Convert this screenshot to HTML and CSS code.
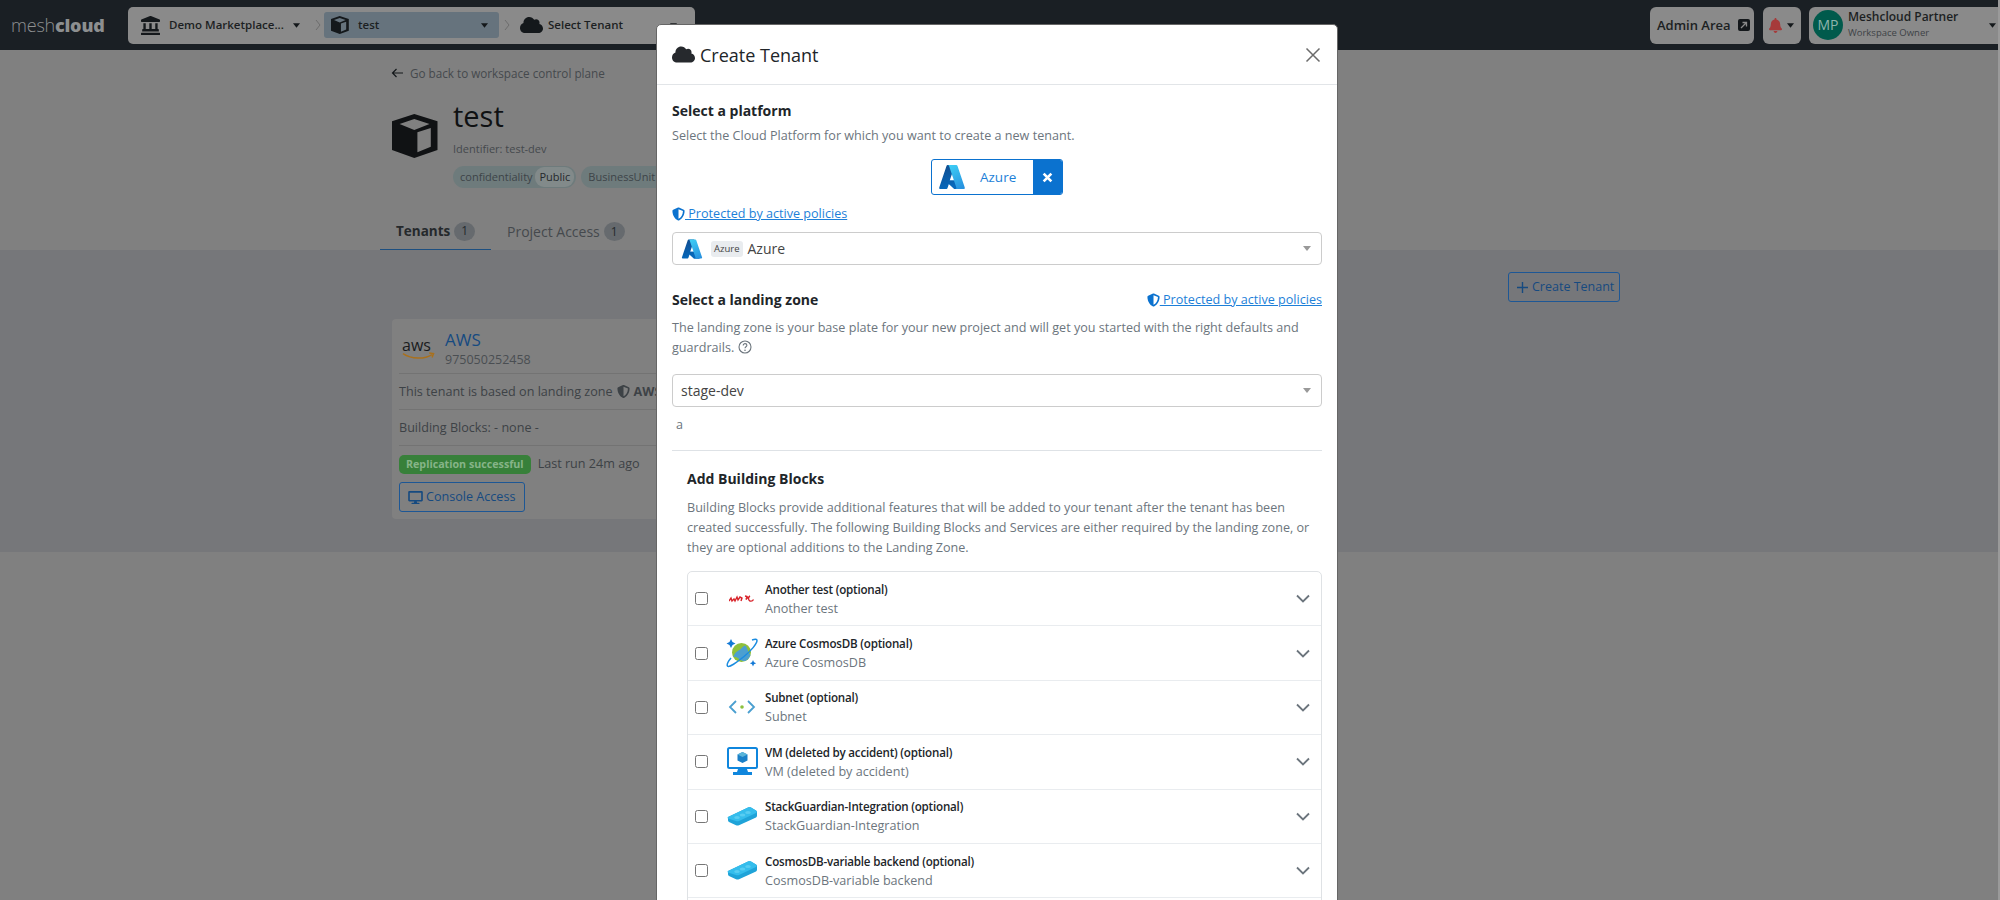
FILE: index.html
```html
<!DOCTYPE html>
<html lang="en">
<head>
  <meta charset="UTF-8" />
  <title>Create Tenant</title>
  <link rel="stylesheet" href="styles.css">
</head>
<body>
  <svg class="defs" width="0" height="0">
    <defs>
      <symbol id="i-cube" viewBox="0 0 46 44" preserveAspectRatio="none"><path fill-rule="evenodd" d="M22.300 0L45.500 7.300V36L22.300 44 0 36V7.300zM22.300 5L7.600 10 22.300 16 37.500 10zM25.400 18.300V38.300L38.800 32.700V14z"/></symbol>
      <symbol id="i-cloud" viewBox="0 0 640 512"><path d="M537.6 226.6c4.1-10.7 6.4-22.4 6.4-34.6 0-53-43-96-96-96-19.7 0-38.1 6-53.3 16.2C367 64.2 315.3 32 256 32c-88.4 0-160 71.6-160 160 0 2.7.1 5.4.2 8.1C40.2 219.8 0 273.2 0 336c0 79.5 64.5 144 144 144h368c70.7 0 128-57.3 128-128 0-61.9-44-113.6-102.4-125.4z"/></symbol>
      <symbol id="i-shield" viewBox="0 0 512 512"><path d="M466.5 83.7l-192-80a48.15 48.15 0 0 0-36.9 0l-192 80C27.7 91.1 16 108.6 16 128c0 198.5 114.5 335.7 221.5 380.3 11.8 4.9 25.1 4.9 36.9 0C360.1 472.6 496 349.3 496 128c0-19.4-11.7-36.9-29.5-44.3zM256.1 446.3l-.1-381 175.9 73.3c-3.3 151.4-82.1 261.1-175.8 307.7z"/></symbol>
      <symbol id="i-chev" viewBox="0 0 14 9"><path d="M1 1.500l6 6 6-6" fill="none" stroke="#6c757d" stroke-width="1.800"/></symbol>
      <symbol id="i-caret" viewBox="0 0 8 5"><path d="M0 0h8L4 5z"/></symbol>
      <symbol id="i-sep" viewBox="0 0 6 12"><path d="M1 1l4 5-4 5" fill="none" stroke="#6d6d6d" stroke-width="1"/></symbol>
      <linearGradient id="az1" x1="0" y1="0" x2="0.3" y2="1"><stop offset="0" stop-color="#114a8b"/><stop offset="1" stop-color="#0669bc"/></linearGradient>
      <linearGradient id="az2" x1="0.3" y1="0" x2="0.7" y2="1"><stop offset="0" stop-color="#3ccbf4"/><stop offset="1" stop-color="#2892df"/></linearGradient>
      <symbol id="i-azure" viewBox="0 0 96 96">
        <path fill="#0078d4" d="M71.17 60.26H29.88a1.91 1.91 0 0 0-1.3 3.31l26.53 24.76a4.17 4.17 0 0 0 2.85 1.13h23.38z"/>
        <path fill="url(#az1)" d="M33.34 6.54a4.12 4.12 0 0 0-3.95 2.88L4.25 83.92a4.14 4.14 0 0 0 3.91 5.54h20.79a4.44 4.44 0 0 0 3.41-2.9l5.02-14.78 17.91 16.7a4.24 4.24 0 0 0 2.66.97h23.29L70.02 60.26l-29.83.01L58.44 6.54z"/>
        <path fill="url(#az2)" d="M66.6 9.36a4.14 4.14 0 0 0-3.93-2.82H33.65a4.15 4.15 0 0 1 3.93 2.82l25.18 74.62a4.15 4.15 0 0 1-3.93 5.48h29.02a4.15 4.15 0 0 0 3.93-5.48z"/>
      </symbol>
      <symbol id="i-brick" viewBox="0 0 30 19">
        <path fill="#1fa3d8" d="M1 10L21 .5c1-.4 2-.4 3 0l5 3c.7.4 1 1 1 1.800v3.500c0 .8-.4 1.400-1 1.700L12 18.300c-1 .4-2 .4-3 0l-7-3.300c-.7-.4-1-1-1-1.800z"/>
        <path fill="#35bdec" d="M1 10L21 .5c1-.4 2-.4 3 0l5 3c1 .6 1 2 0 2.500L12 14c-1 .4-2 .4-3 0L1 11.500c-.6-.4-.6-1.200 0-1.500z"/>
        <ellipse cx="10" cy="10.500" rx="2.800" ry="1.500" fill="#58cdf2"/><ellipse cx="15.500" cy="8" rx="2.800" ry="1.500" fill="#58cdf2"/><ellipse cx="21" cy="5.500" rx="2.800" ry="1.500" fill="#58cdf2"/>
      </symbol>
    </defs>
  </svg>

  <nav class="navbar">
    <a class="logo">mesh<b>cloud</b></a>
    <div class="crumbs">
      <div class="crumb crumb-first">
        <svg class="ic-bank" viewBox="0 0 512 512"><path d="M501.62 92.11L267.24 2.04a31.958 31.958 0 0 0-22.47 0L10.38 92.11A16.001 16.001 0 0 0 0 107.09V144c0 8.84 7.16 16 16 16h480c8.84 0 16-7.16 16-16v-36.91c0-6.67-4.14-12.64-10.38-14.98zM64 192v160H48c-8.84 0-16 7.16-16 16v48h448v-48c0-8.84-7.16-16-16-16h-16V192h-64v160h-96V192h-64v160h-96V192H64zm432 256H16c-8.84 0-16 7.16-16 16v32c0 8.84 7.16 16 16 16h480c8.84 0 16-7.16 16-16v-32c0-8.84-7.16-16-16-16z"/></svg>
        <span>Demo Marketplace...</span>
        <svg class="caret caret-end"><use href="#i-caret"/></svg>
      </div>
      <svg class="sep sep-first"><use href="#i-sep"/></svg>
      <div class="crumb crumb-active">
        <svg class="ic-cube-sm"><use href="#i-cube"/></svg>
        <span>test</span>
        <svg class="caret caret-end"><use href="#i-caret"/></svg>
      </div>
      <svg class="sep sep-second"><use href="#i-sep"/></svg>
      <div class="crumb crumb-last">
        <svg class="ic-cloud-sm"><use href="#i-cloud"/></svg>
        <span>Select Tenant</span>
        <svg class="caret caret-end"><use href="#i-caret"/></svg>
      </div>
    </div>
    <div class="nav-right">
      <a class="nav-btn admin">Admin Area
        <svg class="ic-ext" viewBox="0 0 12 12"><rect width="12" height="12" rx="2" fill="#14181b"/><path d="M3 9l5-5M4.500 3.500h4v4" fill="none" stroke="#8a8a8a" stroke-width="1.300"/></svg>
      </a>
      <a class="nav-btn bell">
        <svg class="ic-bell" viewBox="0 0 448 512"><path d="M224 512c35.32 0 63.97-28.65 63.97-64H160.03c0 35.35 28.65 64 63.97 64zm215.39-149.71c-19.32-20.76-55.47-51.99-55.47-154.29 0-77.7-54.48-139.9-127.94-155.16V32c0-17.67-14.32-32-31.98-32s-31.98 14.33-31.98 32v20.84C118.56 68.1 64.08 130.3 64.08 208c0 102.3-36.15 133.53-55.47 154.29-6 6.45-8.66 14.16-8.61 21.71.11 16.4 12.98 32 32.1 32h383.8c19.12 0 32-15.6 32.1-32 .05-7.55-2.61-15.27-8.61-21.71z"/></svg>
        <svg class="caret"><use href="#i-caret"/></svg>
      </a>
      <a class="nav-btn user">
        <span class="avatar">MP</span>
        <span class="user-text"><span class="user-name">Meshcloud Partner</span><span class="user-role">Workspace Owner</span></span>
        <svg class="caret"><use href="#i-caret"/></svg>
      </a>
    </div>
  </nav>

  <header class="page-head">
    <a class="back"><svg class="back-arrow" viewBox="0 0 12 10"><path d="M12 5H1.500M5.500 1L1.500 5l4 4" fill="none" stroke="#14181b" stroke-width="1.200"/></svg> Go back to workspace control plane</a>
    <div class="title-row">
      <svg class="ic-cube-lg"><use href="#i-cube"/></svg>
      <div>
        <h1>test</h1>
        <div class="identifier">Identifier: test-dev</div>
        <div class="tags">
          <span class="tag">confidentiality <em>Public</em></span>
          <span class="tag">BusinessUnit <em>IT</em></span>
        </div>
      </div>
    </div>
    <div class="tabs">
      <a class="tab tab-active">Tenants <span class="count">1</span></a>
      <a class="tab">Project Access <span class="count">1</span></a>
    </div>
  </header>

  <section class="content">
    <div class="content-inner">
      <div class="actions"><a class="btn-outline btn-create"><svg class="plus" viewBox="0 0 11 11"><path d="M5.500 0v11M0 5.500h11" stroke="#164a80" stroke-width="1.400"/></svg> Create Tenant</a></div>
      <div class="card">
        <div class="card-top">
          <div class="aws-logo">
            <span class="aws-text">aws</span>
            <svg class="aws-smile" viewBox="0 0 34 8"><path d="M1 1.500c9 6 22 6 30 1M28 1l4.500.5-1.500 4" fill="none" stroke="#a9701c" stroke-width="1.500"/></svg>
          </div>
          <div>
            <div class="card-name">AWS</div>
            <div class="card-id">975050252458</div>
          </div>
        </div>
        <div class="card-line">This tenant is based on landing zone <svg class="ic-shield-dk"><use href="#i-shield"/></svg> <b>AWS</b></div>
        <div class="card-line">Building Blocks: - none -</div>
        <div class="card-status"><span class="badge-ok">Replication successful</span><span>Last run 24m ago</span></div>
        <a class="btn-outline btn-console">
          <svg class="ic-desktop" viewBox="0 0 576 512"><path d="M528 0H48C21.5 0 0 21.5 0 48v320c0 26.5 21.5 48 48 48h192l-16 48h-72c-13.3 0-24 10.700-24 24s10.700 24 24 24h272c13.300 0 24-10.700 24-24s-10.700-24-24-24h-72l-16-48h192c26.500 0 48-21.500 48-48V48c0-26.500-21.500-48-48-48zm-16 352H64V64h448v288z"/></svg>
          Console Access</a>
      </div>
    </div>
  </section>

  <div class="page-edge"></div>

  <div class="modal">
    <div class="modal-head">
      <svg class="ic-cloud-md"><use href="#i-cloud"/></svg>
      <h2>Create Tenant</h2>
      <svg class="close" viewBox="0 0 16 16"><path d="M1.500 1.500l13 13M14.500 1.500l-13 13" stroke="#6b6b6b" stroke-width="1.500"/></svg>
    </div>
    <div class="modal-body">
      <h3>Select a platform</h3>
      <p class="muted">Select the Cloud Platform for which you want to create a new tenant.</p>
      <div class="platform-wrap">
        <div class="platform">
          <svg class="ic-azure-lg"><use href="#i-azure"/></svg>
          <span class="platform-name">Azure</span>
          <span class="platform-x"><svg viewBox="0 0 10 10"><path d="M1.500 1.500l7 7M8.500 1.500l-7 7" stroke="#fff" stroke-width="2.400"/></svg></span>
        </div>
      </div>
      <a class="policy"><svg class="ic-shield"><use href="#i-shield"/></svg> Protected by active policies</a>
      <div class="select select-platform">
        <svg class="ic-azure-sm"><use href="#i-azure"/></svg>
        <span class="pill">Azure</span>
        <span>Azure</span>
        <svg class="select-arrow" viewBox="0 0 8 5"><path d="M0 0h8L4 5z"/></svg>
      </div>
      <div class="lz-head">
        <h3>Select a landing zone</h3>
        <a class="policy"><svg class="ic-shield"><use href="#i-shield"/></svg> Protected by active policies</a>
      </div>
      <p class="muted lz-text">The landing zone is your base plate for your new project and will get you started with the right defaults and guardrails.
        <svg class="ic-help" viewBox="0 0 14 14"><circle cx="7" cy="7" r="6" fill="none" stroke="#6c757d" stroke-width="1.100"/><path d="M5.200 5.400c0-2.400 3.700-2.300 3.700-.1 0 1.500-1.900 1.400-1.900 3" fill="none" stroke="#6c757d" stroke-width="1.100"/><circle cx="7" cy="10.300" r=".8" fill="#6c757d"/></svg></p>
      <div class="select select-lz">
        <span>stage-dev</span>
        <svg class="select-arrow" viewBox="0 0 8 5"><path d="M0 0h8L4 5z"/></svg>
      </div>
      <div class="lz-note">a</div>
      <hr>
      <div class="blocks">
        <h3>Add Building Blocks</h3>
        <p class="muted">Building Blocks provide additional features that will be added to your tenant after the tenant has been created successfully. The following Building Blocks and Services are either required by the landing zone, or they are optional additions to the Landing Zone.</p>
        <ul class="block-list">
          <li class="block">
            <input type="checkbox">
            <span class="block-icon"><svg width="26" height="9" viewBox="0 0 26 9"><path d="M0 7l2-3 1 3 2-2 1 2 2-4 1 3 2-3 2 1-1 3M16 2l2 .5-1 3 2-2.500M21 2c-2 1-2 4 0 5 2 .5 3-.5 3.500-1.500" fill="none" stroke="#d8232a" stroke-width="1.400"/></svg></span>
            <span class="block-text"><b>Another test (optional)</b><span>Another test</span></span>
            <svg class="chev"><use href="#i-chev"/></svg>
          </li>
          <li class="block">
            <input type="checkbox">
            <span class="block-icon"><svg width="32" height="32" viewBox="0 0 32 32">
              <circle cx="15.500" cy="15.500" r="9.500" fill="#8fc03a"/>
              <path d="M7 20c4-1 6 3 10 4 3 .6 6-2 7.500-6-3-3-3-7-5-9.500-3 .5-4 4-7 5-2 1-4 3-5.500 6.500z" fill="#4c9fd0"/>
              <path d="M26 3c3-1 5-1 5 .5 0 3-5.500 10-13 16S3 31 1.500 29c-1-1.500 1-5 3.500-8" fill="none" stroke="#1b8ce0" stroke-width="1.500"/>
              <path d="M5 2l1.500 3L9.500 6.500 6.500 8 5 11 3.500 8 .5 6.500 3.500 5z" fill="#1279d6"/>
              <path d="M27 23l1 2.200 2.200 1-2.200 1-1 2.200-1-2.200-2.200-1 2.200-1z" fill="#1279d6"/>
            </svg></span>
            <span class="block-text"><b>Azure CosmosDB (optional)</b><span>Azure CosmosDB</span></span>
            <svg class="chev"><use href="#i-chev"/></svg>
          </li>
          <li class="block">
            <input type="checkbox">
            <span class="block-icon"><svg width="28" height="16" viewBox="0 0 28 16"><path d="M8 2L2 8l6 6M20 2l6 6-6 6" fill="none" stroke="#4a9fd0" stroke-width="1.800"/><circle cx="14" cy="8" r="1.800" fill="#8cc13f"/></svg></span>
            <span class="block-text"><b>Subnet (optional)</b><span>Subnet</span></span>
            <svg class="chev"><use href="#i-chev"/></svg>
          </li>
          <li class="block">
            <input type="checkbox">
            <span class="block-icon"><svg width="31" height="29" viewBox="0 0 31 29"><rect x="1" y="1" width="29" height="20" rx="1.500" fill="#fff" stroke="#0f86dd" stroke-width="2"/><path d="M11 22h9l1 3h4v3H6v-3h4z" fill="#0f86dd"/><path d="M15.500 5l5 2.500v6l-5 2.500-5-2.500v-6z" fill="#1a7fc7"/><path d="M15.500 5l5 2.500-5 2.500-5-2.500z" fill="#59b4d9"/></svg></span>
            <span class="block-text"><b>VM (deleted by accident) (optional)</b><span>VM (deleted by accident)</span></span>
            <svg class="chev"><use href="#i-chev"/></svg>
          </li>
          <li class="block">
            <input type="checkbox">
            <span class="block-icon"><svg class="brick"><use href="#i-brick"/></svg></span>
            <span class="block-text"><b>StackGuardian-Integration (optional)</b><span>StackGuardian-Integration</span></span>
            <svg class="chev"><use href="#i-chev"/></svg>
          </li>
          <li class="block">
            <input type="checkbox">
            <span class="block-icon"><svg class="brick"><use href="#i-brick"/></svg></span>
            <span class="block-text"><b>CosmosDB-variable backend (optional)</b><span>CosmosDB-variable backend</span></span>
            <svg class="chev"><use href="#i-chev"/></svg>
          </li>
          <li class="block block-more"></li>
        </ul>
      </div>
    </div>
  </div>
</body>
</html>
```

FILE: styles.css
```css
html, body {
  height: 900px;
  overflow: hidden;
}
body {
  margin: 0;
  background-color: #808080;
  color: #1c1f22;
  font-family: "Open Sans", "Noto Sans", sans-serif;
  font-size: 12.6px;
  line-height: 20px;
}
svg {
  display: block;
  flex: none;
}
.defs {
  position: absolute;
}
a {
  color: inherit;
}
.page-edge {
  position: absolute;
  top: 0;
  right: 0;
  width: 2px;
  height: 900px;
  background-color: #9a9a9a;
}

/* top bar */
.navbar {
  display: flex;
  align-items: center;
  height: 50px;
  background-color: #1a1f24;
}
.logo {
  width: 128px;
  padding-left: 11px;
  box-sizing: border-box;
  font-size: 18px;
  font-weight: 300;
  color: #8d8f90;
  letter-spacing: -0.2px;
}
.logo b {
  font-weight: 800;
  color: #8d8f90;
}
.crumbs {
  display: flex;
  align-items: center;
  width: 567px;
  height: 37px;
  box-sizing: border-box;
  padding-left: 13px;
  background-color: #8a8a8a;
  border-radius: 5px;
  font-weight: 600;
  font-size: 11.5px;
  white-space: nowrap;
}
.crumb {
  display: flex;
  align-items: center;
  flex: none;
  height: 26px;
  border-radius: 3px;
}
.crumb svg {
  fill: #14181b;
}
.crumb-first {
  width: 159px;
}
.crumb-active {
  width: 175px;
  padding: 0 11px 0 7px;
  box-sizing: border-box;
  background-color: #66737d;
}
.crumb-last {
  width: 166px;
  padding-right: 9px;
  box-sizing: border-box;
}
.ic-bank {
  width: 19px;
  height: 19px;
  margin-right: 9px;
}
.ic-cube-sm {
  width: 18px;
  height: 18px;
  margin-right: 9px;
}
.ic-cloud-sm {
  width: 23px;
  height: 20px;
  margin-right: 5px;
}
.caret {
  width: 7px;
  height: 5px;
  margin-left: 5px;
  fill: #14181b;
}
.caret-end {
  margin-left: auto;
}
.sep {
  width: 6px;
  height: 12px;
}
.sep-first {
  margin: 0 3px 0 15px;
}
.sep-second {
  margin: 0 10px 0 5px;
}
.nav-right {
  display: flex;
  margin-left: auto;
  height: 37px;
}
.nav-btn {
  display: flex;
  align-items: center;
  box-sizing: border-box;
  height: 37px;
  background-color: #8a8a8a;
  border-radius: 6px;
  font-weight: 600;
  font-size: 13px;
}
.admin {
  width: 104px;
  padding-left: 7px;
  margin-right: 9px;
  gap: 7px;
}
.ic-ext {
  width: 12px;
  height: 12px;
}
.bell {
  width: 38px;
  padding-left: 6px;
  margin-right: 8px;
}
.ic-bell {
  width: 13px;
  height: 15px;
  fill: #a63a3a;
}
.user {
  width: 191px;
  padding: 0 4px;
  border-radius: 6px 0 0 6px;
}
.avatar {
  display: flex;
  align-items: center;
  justify-content: center;
  width: 30px;
  height: 30px;
  margin-right: 5px;
  border-radius: 50%;
  background-color: #005a4c;
  color: #8fb5ad;
  font-size: 14px;
  font-weight: 400;
}
.user-text {
  display: flex;
  flex-direction: column;
  flex: 1;
  line-height: 16px;
}
.user-name {
  font-size: 12px;
}
.user-role {
  font-size: 9.500px;
  font-weight: 400;
  color: #3d4246;
}

/* page header */
.page-head {
  width: 1240px;
  height: 200px;
  margin: 0 auto 0 380px;
  box-sizing: border-box;
  padding-top: 13px;
}
.back {
  display: flex;
  align-items: center;
  gap: 7px;
  margin-left: 11px;
  color: #45494d;
  font-size: 11.700px;
}
.back-arrow {
  width: 12px;
  height: 10px;
}
.title-row {
  display: flex;
  margin: 14px 0 0 12px;
}
.ic-cube-lg {
  width: 46px;
  height: 44px;
  margin: 17px 15px 0 0;
  fill: #101214;
}
h1 {
  margin: 0;
  font-size: 29px;
  line-height: 38px;
  font-weight: 500;
  color: #0f1113;
}
.identifier {
  margin-top: 6px;
  font-size: 11px;
  line-height: 16px;
  color: #45494d;
}
.tags {
  display: flex;
  gap: 5px;
  margin-top: 9px;
}
.tag {
  padding: 1px 2px 1px 7px;
  background-color: #6e7b7c;
  border-radius: 11px;
  font-size: 11px;
  color: #3d4448;
  white-space: nowrap;
}
.tag em {
  display: inline-block;
  padding: 0 4px;
  font-style: normal;
  border-radius: 9px;
  background-color: #828a8a;
  color: #25292c;
}
.tabs {
  display: flex;
  margin-top: 25px;
}
.tab {
  display: flex;
  align-items: center;
  gap: 4px;
  height: 37px;
  padding: 0 16px;
  font-size: 14px;
  color: #45494d;
}
.tab-active {
  width: 111px;
  box-sizing: border-box;
  border-bottom: 1px solid #1d4f80;
  font-weight: 700;
  font-size: 13.500px;
  color: #25292c;
}
.count {
  display: flex;
  align-items: center;
  justify-content: center;
  width: 21px;
  height: 19px;
  border-radius: 50%;
  background-color: #666a6e;
  color: #25292c;
  font-size: 12px;
  font-weight: 400;
}

/* tenants section */
.content {
  height: 302px;
  background-color: #76777a;
}
.content-inner {
  width: 1240px;
  margin-left: 380px;
  padding-top: 22px;
}
.actions {
  display: flex;
  justify-content: flex-end;
}
.btn-outline {
  display: flex;
  align-items: center;
  box-sizing: border-box;
  border: 1px solid #1d5795;
  border-radius: 3px;
  color: #164a80;
  font-size: 12.500px;
}
.btn-create {
  width: 112px;
  height: 30px;
  padding-left: 8px;
  gap: 4px;
}
.plus {
  width: 11px;
  height: 11px;
}
.card {
  width: 420px;
  height: 200px;
  margin: 17px 0 0 12px;
  box-sizing: border-box;
  padding: 5px 7px;
  background-color: #808080;
  border-radius: 4px;
  overflow: hidden;
  white-space: nowrap;
  color: #3d4246;
}
.card-top {
  display: flex;
  align-items: center;
  height: 49px;
  border-bottom: 1px solid #737373;
}
.aws-logo {
  width: 46px;
  padding-left: 3px;
  box-sizing: border-box;
}
.aws-text {
  display: block;
  font-size: 16px;
  line-height: 14px;
  color: #1a1c1e;
}
.aws-smile {
  width: 33px;
  height: 8px;
}
.card-name {
  font-size: 17px;
  line-height: 22px;
  color: #164a80;
}
.card-id {
  font-size: 12.500px;
  line-height: 18px;
  color: #4a4e52;
}
.card-line {
  display: flex;
  align-items: center;
  gap: 4px;
  height: 35px;
  border-bottom: 1px solid #737373;
}
.ic-shield-dk {
  width: 13px;
  height: 13px;
  fill: #3d4246;
}
.card-status {
  display: flex;
  align-items: center;
  gap: 7px;
  margin-top: 8px;
}
.badge-ok {
  padding: 0 7px;
  line-height: 19px;
  border-radius: 5px;
  background-color: #37803a;
  color: #86b488;
  font-size: 10.700px;
  font-weight: 700;
}
.btn-console {
  width: 126px;
  height: 30px;
  margin-top: 8px;
  padding-left: 8px;
  gap: 3px;
  font-size: 12.600px;
}
.ic-desktop {
  width: 15px;
  height: 13px;
  fill: #164a80;
}

/* dialog */
.modal {
  position: absolute;
  left: 656px;
  top: 24px;
  width: 682px;
  box-sizing: border-box;
  background-color: #fff;
  border: 1px solid #666;
  border-radius: 5px;
  color: #212529;
}
.modal-head {
  display: flex;
  align-items: center;
  height: 59px;
  padding: 0 16px 0 15px;
  border-bottom: 1px solid #e2e5e8;
}
.ic-cloud-md {
  width: 23px;
  height: 19px;
  margin-right: 5px;
  fill: #26292d;
}
h2 {
  flex: 1;
  margin: 0;
  font-size: 18px;
  font-weight: 400;
}
.close {
  width: 16px;
  height: 16px;
}
.modal-body {
  padding: 15px 15px 0;
}
h3 {
  margin: 0;
  font-size: 14px;
  line-height: 22px;
  font-weight: 700;
}
.muted {
  margin: 4px 0 0;
  color: #6c757d;
}
.platform-wrap {
  display: flex;
  justify-content: center;
  margin-top: 13px;
}
.platform {
  display: flex;
  align-items: center;
  box-sizing: border-box;
  width: 132px;
  height: 36px;
  border: 1px solid #0b72cf;
  border-radius: 3px;
  overflow: hidden;
}
.ic-azure-lg {
  width: 28px;
  height: 28px;
  margin-left: 6px;
}
.platform-name {
  margin-left: 14px;
  color: #1d7fd8;
  font-size: 13.500px;
}
.platform-x {
  display: flex;
  align-items: center;
  justify-content: center;
  width: 29px;
  height: 100%;
  margin-left: auto;
  background-color: #0b72cf;
}
.platform-x svg {
  width: 11px;
  height: 11px;
}
.policy {
  color: #1d7fd8;
  text-decoration: underline;
  line-height: 20px;
}
.platform-wrap + .policy {
  display: block;
  margin-top: 9px;
}
.ic-shield {
  display: inline-block;
  width: 13px;
  height: 14px;
  vertical-align: -3px;
  fill: #0b72cf;
}
.select {
  display: flex;
  align-items: center;
  box-sizing: border-box;
  height: 33px;
  padding: 0 8px;
  border: 1px solid #ccc;
  border-radius: 4px;
  color: #444;
  font-size: 14px;
}
.select-platform {
  margin-top: 8px;
}
.ic-azure-sm {
  width: 22px;
  height: 22px;
  margin-right: 8px;
}
.pill {
  margin-right: 5px;
  padding: 0 3px;
  line-height: 16px;
  background-color: #e9ecef;
  border-radius: 3px;
  font-size: 9.500px;
}
.select-arrow {
  width: 8px;
  height: 5px;
  margin: 0 2px 0 auto;
  fill: #999;
}
.lz-head {
  display: flex;
  justify-content: space-between;
  align-items: center;
  margin-top: 24px;
}
.lz-text {
  margin-top: 7px;
}
.ic-help {
  display: inline-block;
  width: 14px;
  height: 14px;
  vertical-align: -2px;
}
.select-lz {
  margin-top: 16px;
}
.lz-note {
  margin: 8px 0 0 4px;
  color: #6c757d;
}
hr {
  margin: 15px 0 0;
  border: 0;
  border-top: 1px solid #dee2e6;
}
.blocks {
  padding: 17px 0 0 15px;
}
.blocks .muted {
  margin-top: 8px;
}
.block-list {
  margin: 13px 0 0;
  padding: 0;
  list-style: none;
  border: 1px solid #dfe2e5;
  border-radius: 5px 5px 0 0;
}
.block {
  display: flex;
  align-items: center;
  box-sizing: border-box;
  height: 54.400px;
  padding-left: 7px;
  border-bottom: 1px solid #e9ecef;
}
.block input {
  width: 13px;
  height: 13px;
  margin: 0 18px 0 0;
}
.block-icon {
  display: flex;
  justify-content: center;
  width: 32px;
  margin-right: 7px;
}
.brick {
  width: 30px;
  height: 19px;
}
.block-text {
  display: flex;
  flex-direction: column;
  flex: 1;
  font-size: 12.600px;
  line-height: 19px;
  color: #6c757d;
}
.block-text b {
  font-size: 11.600px;
  letter-spacing: -0.2px;
  font-weight: 600;
  color: #212529;
}
.chev {
  width: 14px;
  height: 9px;
  margin-right: 11px;
}
.block-more {
  height: 54px;
}
```
